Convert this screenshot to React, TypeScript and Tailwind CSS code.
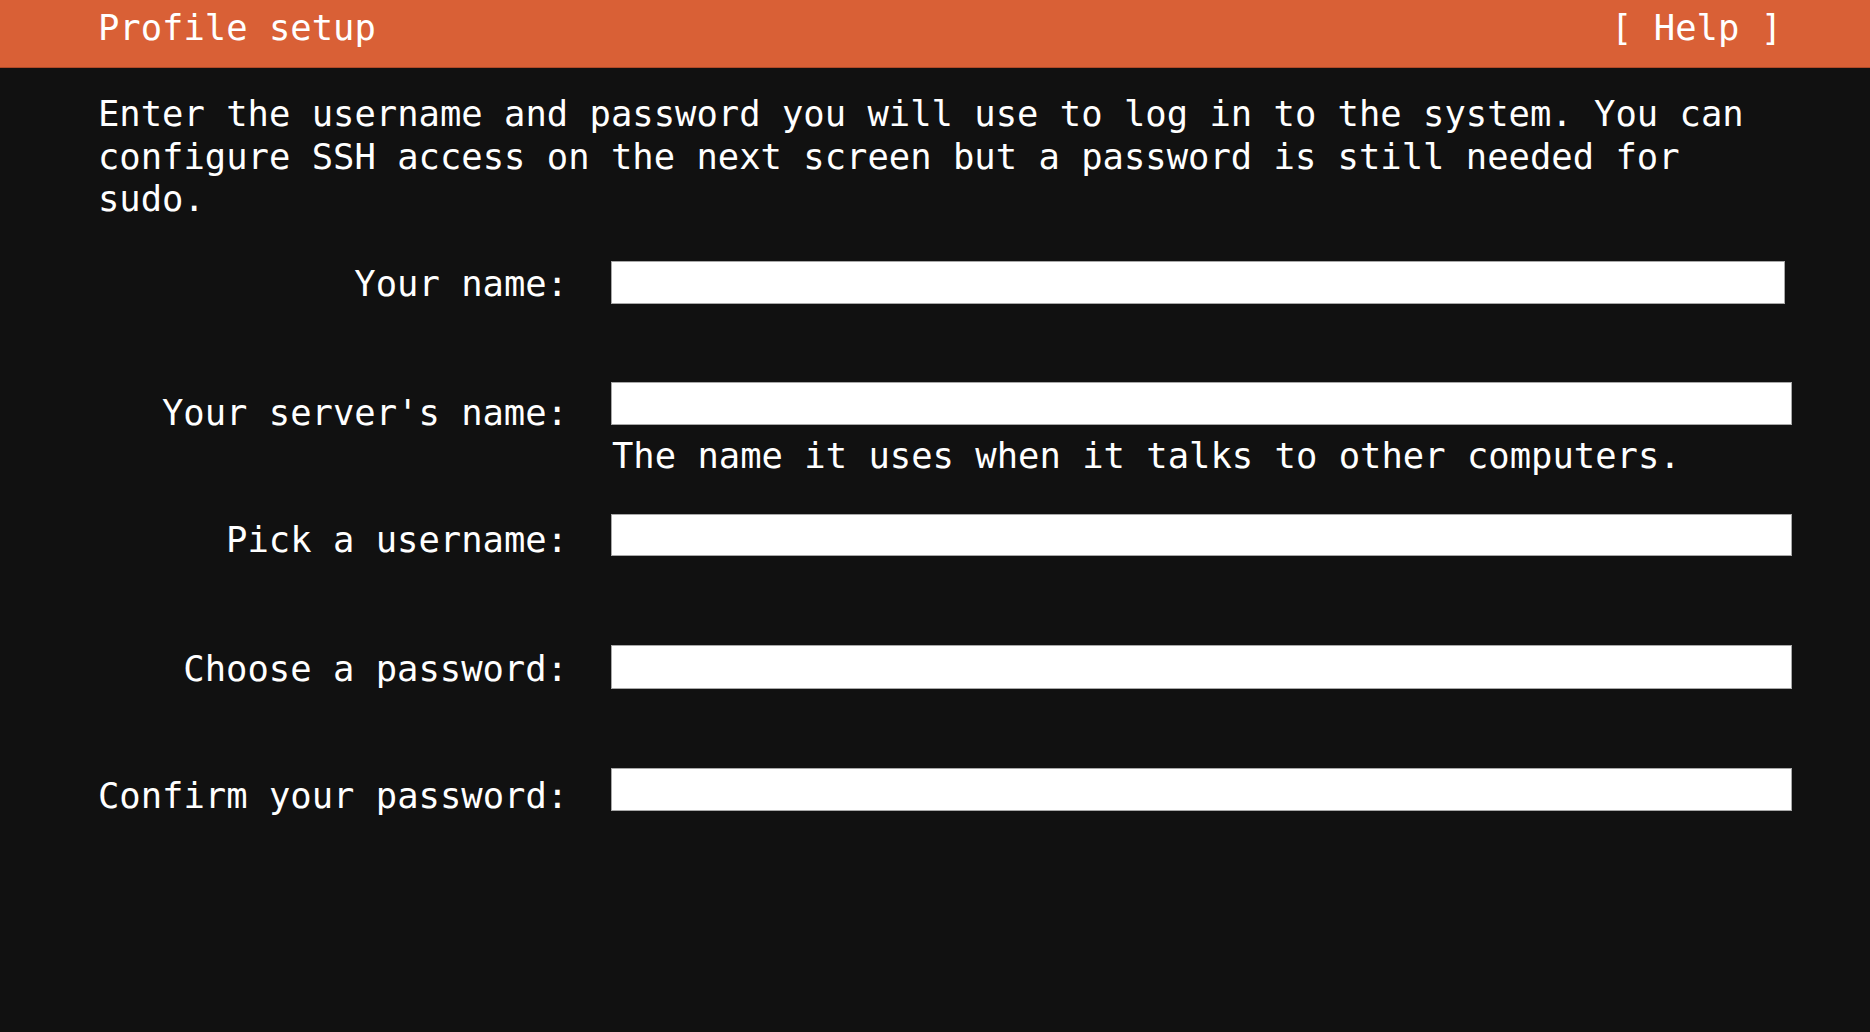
const mono = "font-['DejaVu_Sans_Mono','Liberation_Mono',monospace]";

type Row = {
  label: string;
  rowH: string;
  fieldH: string;
  fieldW: string;
  labelMt: string;
  hint?: string;
};

const rows: Row[] = [
  { label: "Your name:", rowH: "h-[121px]", fieldH: "h-[43px]", fieldW: "w-[1174px]", labelMt: "mt-[2px]" },
  {
    label: "Your server's name:",
    rowH: "h-[132px]",
    fieldH: "h-[43px]",
    fieldW: "w-[1181px]",
    labelMt: "mt-[10px]",
    hint: "The name it uses when it talks to other computers.",
  },
  { label: "Pick a username:", rowH: "h-[131px]", fieldH: "h-[42px]", fieldW: "w-[1181px]", labelMt: "mt-[5px]" },
  { label: "Choose a password:", rowH: "h-[123px]", fieldH: "h-[44px]", fieldW: "w-[1181px]", labelMt: "mt-[3px]" },
  { label: "Confirm your password:", rowH: "h-[43px]", fieldH: "h-[43px]", fieldW: "w-[1181px]", labelMt: "mt-[7px]" },
];

function FormRow({ row }: { row: Row }) {
  return (
    <div className={`flex items-start ${row.rowH}`}>
      <div className={`w-[470px] shrink-0 text-right whitespace-pre ${row.labelMt}`}>{row.label}</div>
      <div className="ml-[43px] flex flex-col">
        <div className={`${row.fieldH} ${row.fieldW} bg-white border border-[#a8a8a8]`} />
        {row.hint && <div className="mt-[10px] ml-[1px] whitespace-pre">{row.hint}</div>}
      </div>
    </div>
  );
}

export default function App() {
  return (
    <div className={`w-[1870px] h-[1032px] bg-[#111111] text-white text-[35.5px] leading-[42.64px] overflow-hidden ${mono}`}>
      <header className="h-[68px] bg-[#d96036] border-b border-[#b04a28] pt-[7px]">
        <div className="ml-[98px] w-[1684px] flex justify-between whitespace-pre">
          <span>Profile setup</span>
          <span>[ Help ]</span>
        </div>
      </header>

      <div className="ml-[98px]">
        <p className="mt-[25px] w-[1688px]">
          Enter the username and password you will use to log in to the system. You can configure SSH access on the
          next screen but a password is still needed for sudo.
        </p>

        <div className="mt-[40px] flex flex-col">
          {rows.map((r) => (
            <FormRow key={r.label} row={r} />
          ))}
        </div>
      </div>
    </div>
  );
}
